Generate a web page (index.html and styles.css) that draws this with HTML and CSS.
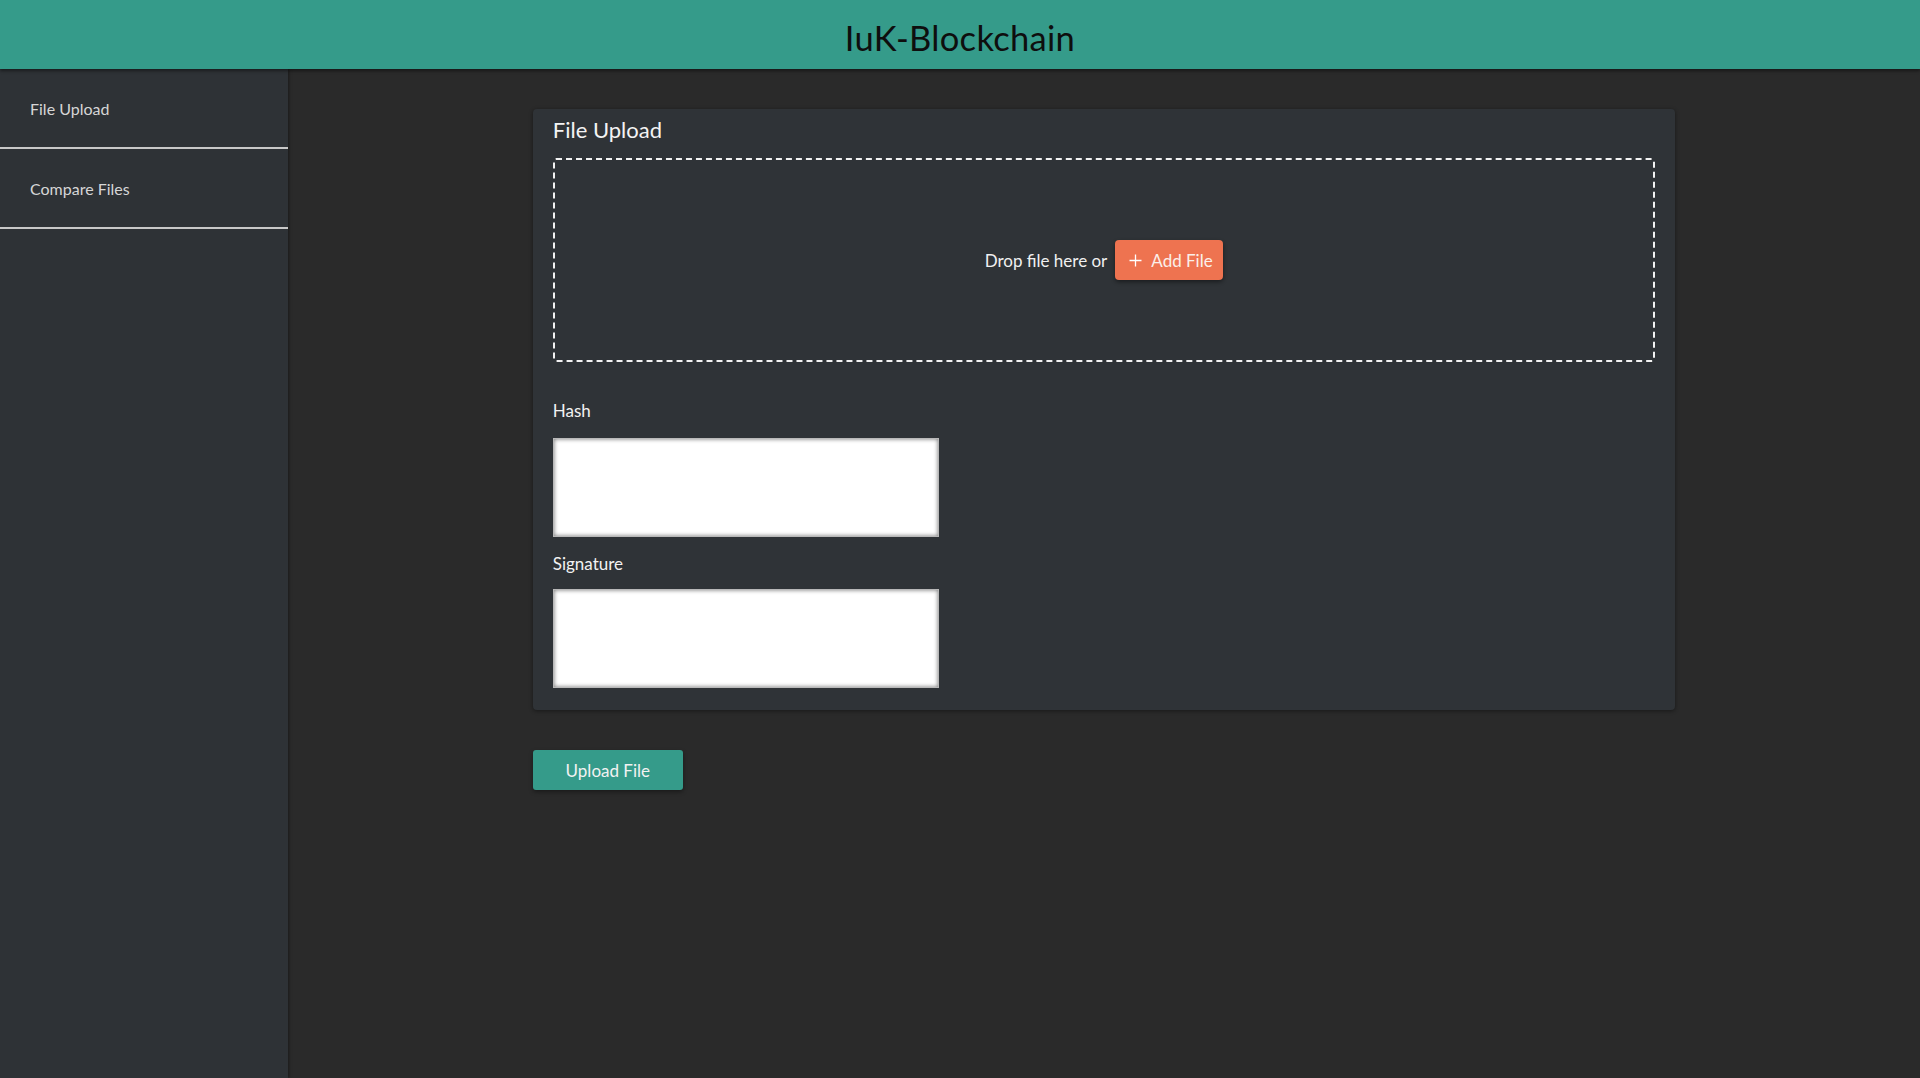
FILE: index.html
```html
<!DOCTYPE html>
<html lang="en">
<head>
<meta charset="utf-8">
<title>IuK-Blockchain</title>
<link rel="stylesheet" href="styles.css">
</head>
<body>
<header class="topbar">
  <h1 class="brand">IuK-Blockchain</h1>
</header>
<div class="layout">
  <nav class="sidebar">
    <a class="nav-item" href="#">File Upload</a>
    <a class="nav-item" href="#">Compare Files</a>
  </nav>
  <main class="main">
    <section class="card">
      <h2 class="card-title">File Upload</h2>
      <div class="dropzone">
        <span class="drop-text">Drop file here or</span>
        <button class="add-btn" type="button">
          <svg class="plus" width="13" height="13" viewBox="0 0 13 13" aria-hidden="true"><path d="M6.5 0.5v12M0.5 6.5h12" stroke="#ffffff" stroke-width="1.3" fill="none"/></svg>
          <span>Add File</span>
        </button>
      </div>
      <div class="field field-first">
        <label class="field-label">Hash</label>
        <textarea class="field-box"></textarea>
      </div>
      <div class="field">
        <label class="field-label">Signature</label>
        <textarea class="field-box"></textarea>
      </div>
    </section>
    <button class="upload-btn" type="button">Upload File</button>
  </main>
</div>
</body>
</html>
```
FILE: styles.css
```css
* { box-sizing: border-box; }
html, body { margin: 0; padding: 0; height: 100%; }
body {
  font-family: Lato, "Open Sans", "Liberation Sans", sans-serif;
  background: #2a2a2a;
  color: #f0f0f0;
  display: flex;
  flex-direction: column;
  min-height: 1078px;
}
.topbar {
  height: 69px;
  background: #359b8a;
  display: flex;
  align-items: center;
  justify-content: center;
  box-shadow: 0 2px 3px rgba(0,0,0,0.45);
  position: relative;
  z-index: 2;
  flex: 0 0 auto;
}
.brand {
  margin: 0;
  font-weight: 400;
  font-size: 34.5px;
  color: #0e0e0e;
  letter-spacing: 0.3px;
  padding-top: 6px;
}
.layout {
  flex: 1 1 auto;
  display: flex;
}
.sidebar {
  width: 288px;
  flex: 0 0 288px;
  background: #2e3236;
  box-shadow: 1px 0 3px rgba(0,0,0,0.4);
  display: flex;
  flex-direction: column;
  position: relative;
  z-index: 1;
}
.nav-item {
  display: flex;
  align-items: center;
  height: 80px;
  padding-left: 30px;
  color: #d6d6d6;
  font-size: 16px;
  text-decoration: none;
  border-bottom: 2px solid #c8c8c8;
}
.main {
  flex: 1 1 auto;
  padding-top: 40px;
  display: flex;
  flex-direction: column;
  align-items: center;
}
.card {
  width: 70%;
  background: #2f3337;
  border-radius: 4px;
  box-shadow: 0 1px 4px rgba(0,0,0,0.45);
  padding: 4px 20px 22px 20px;
}
.card-title {
  margin: 0 0 11px 0;
  font-size: 22px;
  font-weight: 400;
  line-height: 34px;
  color: #f4f4f4;
}
.dropzone {
  height: 204px;
  border: 2px dashed #f2f2f2;
  border-radius: 3px;
  display: flex;
  align-items: center;
  justify-content: center;
  gap: 8px;
}
.drop-text {
  font-size: 17px;
  color: #f0f0f0;
}
.add-btn {
  height: 40px;
  width: 108px;
  background: #ee7350;
  border: none;
  border-radius: 4px;
  box-shadow: 0 2px 4px rgba(0,0,0,0.45);
  color: #fbefe9;
  font-family: inherit;
  font-size: 17px;
  display: flex;
  align-items: center;
  gap: 9px;
  padding: 0 0 0 14px;
}
.plus { display: block; }
.field-first { margin-top: 37px; }
.field + .field { margin-top: 15px; }
.field-label {
  display: block;
  font-size: 17px;
  line-height: 24px;
  color: #f2f2f2;
  margin-bottom: 15px;
}
.field + .field .field-label { margin-bottom: 13px; }
.field-box {
  display: block;
  width: 386px;
  height: 99px;
  background: #ffffff;
  border: 1px solid #b8b8b8;
  box-shadow: inset 0 0 4px rgba(0,0,0,0.55);
  resize: none;
  margin: 0;
  border-radius: 0;
}
.upload-btn {
  align-self: flex-start;
  margin-left: 15%;
  margin-top: 40px;
  width: 150px;
  height: 40px;
  background: #359b8a;
  border: none;
  border-radius: 3px;
  box-shadow: 0 2px 4px rgba(0,0,0,0.4);
  color: #f2f2f2;
  font-family: inherit;
  font-size: 17px;
}
```
